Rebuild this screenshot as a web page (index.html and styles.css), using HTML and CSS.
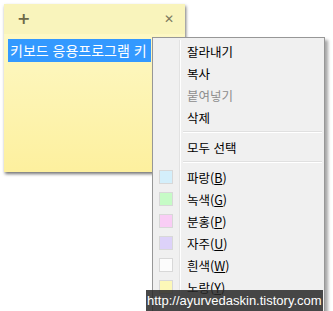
FILE: index.html
```html
<!DOCTYPE html>
<html lang="ko">
<head>
    <meta charset="UTF-8">
    <title>스티커 메모</title>
    <link rel="stylesheet" href="styles.css">
</head>
<body>
    <div class="note">
        <div class="note-bar">
            <span class="note-btn">+</span>
            <span class="note-btn close">&#x2715;</span>
        </div>
        <div class="note-body">
            <span class="selected">키보드 응용프로그램 키</span>
        </div>
    </div>

    <div class="menu">
        <ul class="menu-list">
            <li class="item">잘라내기</li>
            <li class="item">복사</li>
            <li class="item disabled">붙여넣기</li>
            <li class="item">삭제</li>
            <li class="sep"></li>
            <li class="item">모두 선택</li>
            <li class="sep"></li>
            <li class="item"><span class="swatch blue"></span>파랑(<u>B</u>)</li>
            <li class="item"><span class="swatch green"></span>녹색(<u>G</u>)</li>
            <li class="item"><span class="swatch pink"></span>분홍(<u>P</u>)</li>
            <li class="item"><span class="swatch purple"></span>자주(<u>U</u>)</li>
            <li class="item"><span class="swatch white"></span>흰색(<u>W</u>)</li>
            <li class="item"><span class="swatch yellow"></span>노랑(<u>Y</u>)</li>
        </ul>
    </div>

    <div class="watermark">http://ayurvedaskin.tistory.com</div>
</body>
</html>
```

FILE: styles.css
```css
* {
    margin: 0;
    padding: 0;
    box-sizing: border-box;
}

html {
    overflow: hidden;
}

body {
    width: 333px;
    height: 311px;
    overflow: hidden;
    position: relative;
    background: #fff;
    font-family: "Noto Sans CJK KR", "DejaVu Sans", sans-serif;
    color: #000;
}

.note {
    margin: 4px 0 0 4px;
    width: 181px;
    height: 168px;
    display: flex;
    flex-direction: column;
    box-shadow: 1px 2px 3px rgba(0,0,0,0.55);
}

.note-bar {
    height: 30px;
    background: #f9f4bc;
    display: flex;
    justify-content: space-between;
    align-items: center;
    padding: 0 11px 0 13px;
}

.note-btn {
    font-family: "DejaVu Sans", sans-serif;
    font-size: 16px;
    font-weight: bold;
    color: #6e6a48;
    line-height: 1;
}

.note-btn.close {
    font-size: 12px;
    font-weight: normal;
    color: #7c7a5c;
}

.note-body {
    flex: 1;
    background: linear-gradient(#fdf8c4, #fdf09e);
    padding: 3px 0 0 4px;
}

.selected {
    display: inline-block;
    background: #3399ff;
    color: #fff;
    font-size: 14px;
    line-height: 23px;
    padding: 0 4px 0 2px;
    white-space: nowrap;
}

.menu {
    position: absolute;
    left: 152px;
    top: 37px;
    width: 173px;
    height: 274px;
    background: #f0f0f0;
    border: 1px solid #979797;
    border-bottom: none;
    box-shadow: 3px 3px 3px rgba(0,0,0,0.35);
    padding: 2px 2px 0 2px;
}

.menu-list {
    list-style: none;
    background: linear-gradient(to right, transparent 24px, #e2e2e2 24px, #e2e2e2 25px, #fff 25px, #fff 26px, transparent 26px);
    height: 100%;
}

.item {
    height: 22px;
    display: flex;
    align-items: center;
    padding-left: 32px;
    font-size: 12.5px;
    position: relative;
    color: #000;
}

.item.disabled {
    color: #8d8d8d;
}

.item u {
    text-decoration: underline;
}

.sep {
    margin-left: 28px;
    border-top: 1px solid #e0e0e0;
    border-bottom: 1px solid #fff;
    margin-top: 3px;
    height: 2px;
    margin-bottom: 3px;
}

.swatch {
    position: absolute;
    left: 4px;
    top: 4px;
    width: 14px;
    height: 14px;
    border: 1px solid #d8d8d8;
}

.swatch.blue { background: #d4effb; }
.swatch.green { background: #c6fbc6; }
.swatch.pink { background: #f9cdf5; }
.swatch.purple { background: #ddd2f9; }
.swatch.white { background: #fcfcfc; }
.swatch.yellow { background: #fcf8b8; }

.watermark {
    position: absolute;
    left: 146px;
    top: 290px;
    width: 177px;
    height: 21px;
    background: rgba(40,40,40,0.85);
    color: #fff;
    font-family: "Liberation Sans", sans-serif;
    font-size: 13px;
    line-height: 21px;
    padding-left: 1px;
    white-space: nowrap;
    overflow: hidden;
}
```
